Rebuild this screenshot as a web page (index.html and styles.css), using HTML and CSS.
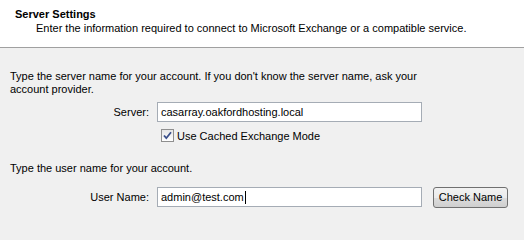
FILE: index.html
```html
<!DOCTYPE html>
<html>
<head>
<meta charset="utf-8">
<link rel="stylesheet" href="styles.css">
</head>
<body>
<div class="header">
  <div class="title">Server Settings</div>
  <div class="subtitle">Enter the information required to connect to Microsoft Exchange or a compatible service.</div>
</div>
<div class="content">
  <p class="intro">Type the server name for your account. If you don't know the server name, ask your account provider.</p>
  <div class="row">
    <label class="label">Server:</label>
    <div class="field">casarray.oakfordhosting.local</div>
  </div>
  <div class="check-row">
    <span class="checkbox">
      <svg width="13" height="13" viewBox="0 0 13 13"><path d="M3 6.5 L5.3 9.2 L10 3.2" fill="none" stroke="#3a4f8a" stroke-width="1.8"/></svg>
    </span>
    <span class="check-label">Use Cached Exchange Mode</span>
  </div>
  <p class="intro second">Type the user name for your account.</p>
  <div class="row user">
    <label class="label">User Name:</label>
    <div class="field">admin@test.com<span class="caret"></span></div>
    <button class="btn">Check Name</button>
  </div>
</div>
</body>
</html>
```
FILE: styles.css
```css
html, body { margin: 0; padding: 0; }
body {
  width: 524px; height: 240px; overflow: hidden;
  background: #f0f0f0;
  font-family: "Liberation Sans", Arial, sans-serif;
  font-size: 11px;
  color: #000;
}
.header {
  background: #fff;
  height: 48px;
  border-bottom: 1px solid #a0a0a0;
  box-sizing: border-box;
  padding: 7px 0 0 15px;
}
.title { font-weight: bold; line-height: 14px; }
.subtitle { padding-left: 21px; line-height: 14px; }
.content { padding: 22px 0 0 10px; }
.intro { margin: 0; line-height: 13px; width: 420px; }
.row { display: flex; align-items: center; margin-top: 6px; height: 20px; }
.label { width: 147px; text-align: right; padding-right: 8px; box-sizing: border-box; }
.field {
  width: 265px; height: 20px; box-sizing: border-box;
  background: #fff; border: 1px solid #a5acb5;
  padding: 2px 3px; line-height: 14px;
  display: flex; align-items: center;
}
.caret { display: inline-block; width: 1px; height: 13px; background: #000; margin-left: 1px; }
.check-row { display: flex; align-items: center; margin: 6px 0 0 151px; height: 15px; }
.checkbox {
  width: 13px; height: 13px; box-sizing: border-box;
  border: 1px solid #8f8f8f; background: linear-gradient(#e6e6e6, #fff);
  display: flex; margin-right: 3px;
}
.checkbox svg { margin: -1px; }
.second { margin-top: 19px; }
.user { margin-top: 12px; }
.btn {
  margin-left: 11px; width: 75px; height: 21px;
  border: 1px solid #707070; border-radius: 3px;
  background: linear-gradient(#f2f2f2 0%, #ebebeb 50%, #dddddd 51%, #cfcfcf 100%);
  font: inherit; padding: 0;
}
```
